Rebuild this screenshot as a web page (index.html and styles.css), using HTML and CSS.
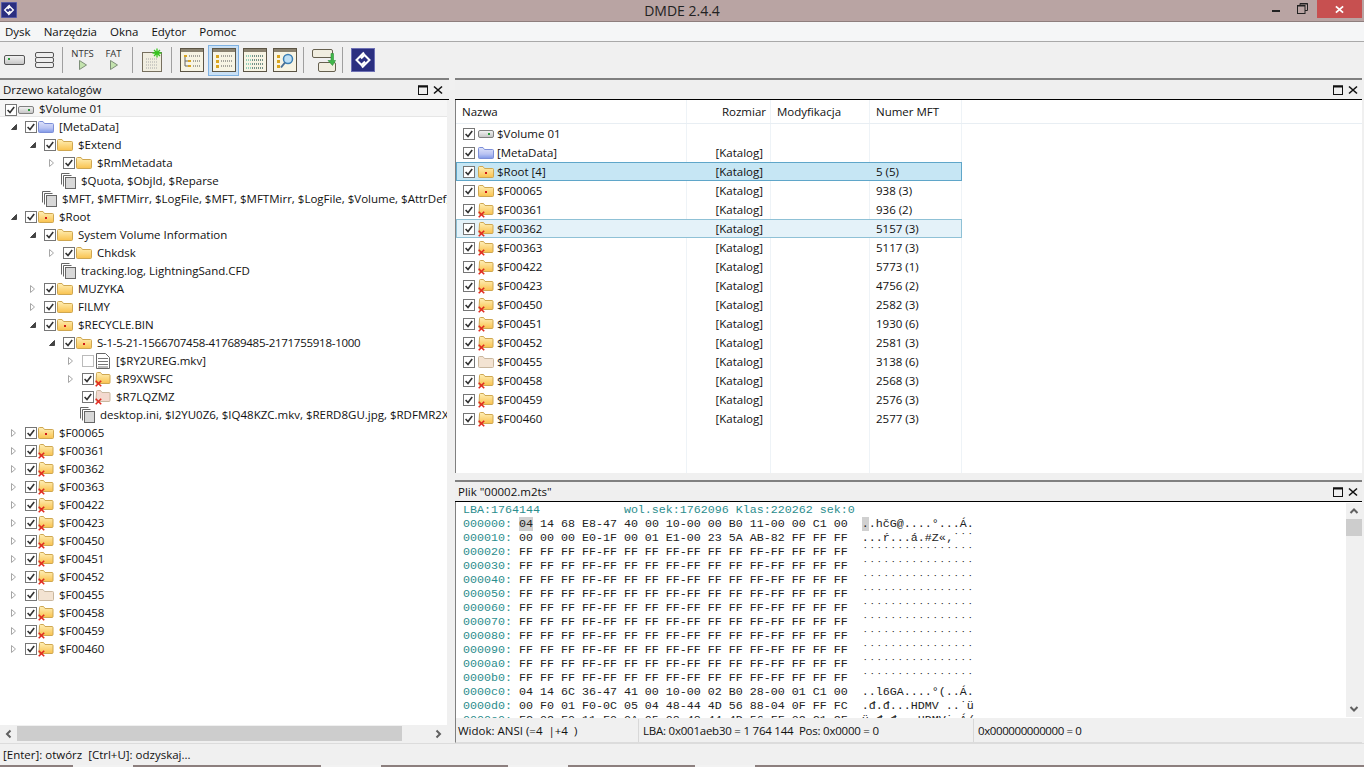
FILE: index.html
```html
<!DOCTYPE html>
<html lang="pl">
<head>
  <meta charset="UTF-8">
  <title>DMDE 2.4.4</title>
  <link rel="stylesheet" href="styles.css">
</head>
<body>

  <!-- Ikony -->
  <svg class="defs" width="0" height="0">
    <defs>
      <linearGradient id="gy" x1="0" y1="0" x2="0" y2="1"><stop offset="0" stop-color="#fff0b8"/><stop offset="1" stop-color="#f9c24e"/></linearGradient>
      <linearGradient id="gb" x1="0" y1="0" x2="0" y2="1"><stop offset="0" stop-color="#dfe3fa"/><stop offset=".6" stop-color="#b9c3f2"/><stop offset="1" stop-color="#7e97e8"/></linearGradient>
      <linearGradient id="gh" x1="0" y1="0" x2="0" y2="1"><stop offset="0" stop-color="#f4f4f4"/><stop offset="1" stop-color="#c4c4c4"/></linearGradient>
    </defs>
    <symbol id="cb" viewBox="0 0 12 12"><rect x=".5" y=".5" width="11" height="11" fill="#fff" stroke="#767676"/><path d="M2.6 6l2.4 2.6 4.2-5.600" fill="none" stroke="#333" stroke-width="1.600"/></symbol>
    <symbol id="cb-off" viewBox="0 0 12 12"><rect x=".5" y=".5" width="11" height="11" fill="#fff" stroke="#777" stroke-dasharray="1 1"/></symbol>
    <symbol id="open" viewBox="0 0 8 8"><path d="M1.500.5l4 3.500-4 3.500z" fill="#fff" stroke="#a6a6a6"/></symbol>
    <symbol id="shut" viewBox="0 0 8 8"><path d="M6.500 1.500v5h-5z" fill="#444" stroke="#444"/></symbol>
    <symbol id="hdd" viewBox="0 0 16 16"><rect x=".5" y="4.500" width="15" height="7" rx="1.500" fill="url(#gh)" stroke="#808080"/><rect x="10" y="7" width="2" height="2" fill="#2a9a3a"/></symbol>
    <symbol id="folder" viewBox="0 0 16 16"><path d="M.5 4V3.500a1 1 0 0 1 1-1h3.500l1.500 2h8a1 1 0 0 1 1 1v7a1 1 0 0 1-1 1h-13a1 1 0 0 1-1-1z" fill="url(#gy)" stroke="#cfa751"/></symbol>
    <symbol id="folder-blue" viewBox="0 0 16 16"><path d="M.5 4V3.500a1 1 0 0 1 1-1h3.500l1.500 2h8a1 1 0 0 1 1 1v7a1 1 0 0 1-1 1h-13a1 1 0 0 1-1-1z" fill="url(#gb)" stroke="#7d8fd8"/></symbol>
    <symbol id="folder-dot" viewBox="0 0 16 16"><path d="M.5 4V3.500a1 1 0 0 1 1-1h3.500l1.500 2h8a1 1 0 0 1 1 1v7a1 1 0 0 1-1 1h-13a1 1 0 0 1-1-1z" fill="url(#gy)" stroke="#cfa751"/><rect x="7" y="8" width="2" height="2" fill="#d01818"/></symbol>
    <symbol id="folder-x" viewBox="0 0 16 16"><path d="M1.500 3V2.500a1 1 0 0 1 1-1h3l1.500 2h7a1 1 0 0 1 1 1v7a1 1 0 0 1-1 1h-12a1 1 0 0 1-1-1z" fill="url(#gy)" stroke="#cfa751"/><path d="M.7 9.700l5.500 5.600m0-5.600l-5.500 5.600" fill="none" stroke="#e02a20" stroke-width="1.600"/></symbol>
    <symbol id="folder-pale" viewBox="0 0 16 16"><path d="M.5 4V3.500a1 1 0 0 1 1-1h3.500l1.500 2h8a1 1 0 0 1 1 1v7a1 1 0 0 1-1 1h-13a1 1 0 0 1-1-1z" fill="#f3e3d2" stroke="#c9b79f"/></symbol>
    <symbol id="folder-pale-x" viewBox="0 0 16 16"><path d="M1.500 3V2.500a1 1 0 0 1 1-1h3l1.500 2h7a1 1 0 0 1 1 1v7a1 1 0 0 1-1 1h-12a1 1 0 0 1-1-1z" fill="#f3d9cf" stroke="#c9b79f"/><path d="M.7 9.700l5.500 5.600m0-5.600l-5.500 5.600" fill="none" stroke="#e02a20" stroke-width="1.600"/></symbol>
    <symbol id="files" viewBox="0 0 16 16"><path d="M.5 11.500V.5h8M2.500 13.500V2.500h8" fill="#fff" stroke="#666"/><rect x="4.500" y="4.500" width="10" height="11" fill="#d8d8d8" stroke="#666"/></symbol>
    <symbol id="file-lines" viewBox="0 0 16 16"><path d="M1.500.5h9l4 4v11h-13z" fill="#fff" stroke="#666"/><path d="M3 5.500h10M3 8.500h10M3 11.500h10M3 14h10" stroke="#777"/></symbol>
    <symbol id="logo" viewBox="0 0 24 24"><rect width="24" height="24" fill="#2b2f80"/><rect x=".5" y=".5" width="23" height="23" fill="none" stroke="#6d70b4"/><path d="M13 4.500L5.500 12l5 5 3.500-3.500M11 19.500l7.500-7.500-5-5L10 10.500" fill="none" stroke="#fff" stroke-width="2"/></symbol>
    <symbol id="up" viewBox="0 0 10 10"><path d="M1.500 7L5 3.500 8.500 7" fill="none" stroke="#606060" stroke-width="2"/></symbol>
    <symbol id="down" viewBox="0 0 10 10"><path d="M1.500 3L5 6.500 8.500 3" fill="none" stroke="#606060" stroke-width="2"/></symbol>
    <symbol id="left" viewBox="0 0 10 10"><path d="M7 1.500L3.500 5 7 8.500" fill="none" stroke="#606060" stroke-width="2"/></symbol>
    <symbol id="right" viewBox="0 0 10 10"><path d="M3 1.500L6.500 5 3 8.500" fill="none" stroke="#606060" stroke-width="2"/></symbol>
    <symbol id="max" viewBox="0 0 10 10"><rect x=".5" y="1" width="9" height="8.500" fill="none" stroke="#111"/><path d="M0 1.500h10" stroke="#111" stroke-width="2"/></symbol>
    <symbol id="close" viewBox="0 0 10 10"><path d="M1 1.500l8 7m0-7l-8 7" fill="none" stroke="#111" stroke-width="1.600"/></symbol>
    <symbol id="play" viewBox="0 0 10 12"><path d="M1.500 1.500l7 4.500-7 4.500z" fill="#c4e3ae" stroke="#7d8f78"/></symbol>
    <symbol id="tb-frame" viewBox="0 0 24 24"><rect x=".5" y=".5" width="23" height="23" fill="#f7f4e4" stroke="#5c5545"/><rect x="1" y="1" width="22" height="3" fill="#8a8270"/></symbol>
  </svg>

  <div class="titlebar">
    <svg class="app-icon"><use href="#logo"/></svg>
    <span class="app-name">DMDE 2.4.4</span>
    <div class="win-btns">
      <span class="win-min"></span>
      <svg class="win-restore" viewBox="0 0 11 11"><path d="M3 2.500V.5h7.500v7H8" fill="none" stroke="#222"/><rect x=".5" y="2.500" width="7.500" height="8" fill="none" stroke="#222"/><path d="M0 3h8M3 1h8" stroke="#222"/></svg>
      <span class="win-close"><svg viewBox="0 0 10 10"><path d="M1 1.500l8 7m0-7l-8 7" fill="none" stroke="#fff" stroke-width="2"/></svg></span>
    </div>
  </div>

  <div class="menubar">
    <span>Dysk</span><span>Narzędzia</span><span>Okna</span><span>Edytor</span><span>Pomoc</span>
  </div>

  <div class="toolbar">
    <div class="tb tb-first">
      <svg width="22" height="12" viewBox="0 0 22 12"><rect x=".5" y="1.500" width="20" height="9" rx="1.500" fill="url(#gh)" stroke="#555"/><rect x="4" y="4" width="2" height="2" fill="#2a9a3a"/></svg>
    </div>
    <div class="tb tb-narrow">
      <svg width="19" height="17" viewBox="0 0 19 17"><rect x=".5" y=".5" width="18" height="5" rx="1.500" fill="#eee" stroke="#555"/><rect x=".5" y="5.500" width="18" height="5" rx="1.500" fill="#eee" stroke="#555"/><rect x=".5" y="10.500" width="18" height="5" rx="1.500" fill="#eee" stroke="#555"/></svg>
    </div>
    <span class="sep"></span>
    <div class="tb tb-label tb-after-sep"><span>NTFS</span><svg width="10" height="12"><use href="#play"/></svg></div>
    <div class="tb tb-label"><span>FAT</span><svg width="10" height="12"><use href="#play"/></svg></div>
    <span class="sep"></span>
    <div class="tb tb-after-sep">
      <svg width="21" height="24" viewBox="0 0 21 24"><rect x=".5" y="4.500" width="19" height="19" fill="#f1eee0" stroke="#77705f"/><path d="M4 11h12M4 14h12M4 17h12M4 20h12" stroke="#a8a8a8" stroke-dasharray="1 1"/><path d="M15 .5v9M10.500 5h9M12 2l6 6m0-6l-6 6" stroke="#36c41e" stroke-width="1.300"/></svg>
    </div>
    <span class="sep"></span>
    <div class="tb tb-after-sep">
      <svg width="24" height="24"><use href="#tb-frame"/><path d="M4 7h3v2H4zM8 12h3v2H8zM8 17h3v2H8z" fill="#d9a520"/><path d="M5 9v9h3M5 13h3" fill="none" stroke="#666"/><path d="M9 8h11M13 13h7M13 18h7" stroke="#555" stroke-dasharray="1 1"/></svg>
    </div>
    <div class="tb tb-active">
      <svg width="24" height="24"><use href="#tb-frame"/><path d="M4 7h3v3H4zM4 12h3v3H4zM4 17h3v3H4z" fill="#d9a520"/><path d="M9 8h11M9 13h11M9 18h11" stroke="#555" stroke-dasharray="1 1"/></svg>
    </div>
    <div class="tb">
      <svg width="24" height="24"><use href="#tb-frame"/><path d="M3 8h18M3 12h18M3 16h18M3 20h18" stroke="#2fa78f" stroke-dasharray="1 1"/><path d="M9 8h12M9 12h12M9 16h12M9 20h12" stroke="#555" stroke-dasharray="1 1"/></svg>
    </div>
    <div class="tb tb-narrow">
      <svg width="24" height="24"><use href="#tb-frame"/><path d="M4 7h3v3H4zM4 12h3v3H4zM4 17h3v3H4z" fill="#d9a520"/><circle cx="15" cy="11" r="4.500" fill="#bfe0f5" stroke="#3b7fb5" stroke-width="1.500"/><path d="M12 14.500l-4 5" stroke="#4a6f94" stroke-width="2"/></svg>
    </div>
    <span class="sep"></span>
    <div class="tb tb-after-sep">
      <svg width="24" height="23" viewBox="0 0 24 23"><rect x=".5" y=".5" width="20" height="8" rx="1.500" fill="#f1eee0" stroke="#66604f"/><rect x="6.500" y="13.500" width="17" height="9" rx="1.500" fill="#f1eee0" stroke="#66604f"/><path d="M19 4.500v7h-3l4.500 5 3-5h-2v-7z" fill="#40b84a" stroke="#2d8f38" stroke-width=".6"/></svg>
    </div>
    <span class="sep"></span>
    <div class="tb tb-after-sep"><svg width="24" height="24"><use href="#logo"/></svg></div>
  </div>

  <div class="main">

    <!-- Drzewo katalogów -->
    <div class="panel panel-tree">
      <div class="panel-head">
        <span>Drzewo katalogów</span>
        <svg class="head-btn"><use href="#max"/></svg><svg class="head-btn"><use href="#close"/></svg>
      </div>
      <div class="tree">
        <div class="row l0 row-current"><svg class="cb"><use href="#cb"/></svg><svg class="ico"><use href="#hdd"/></svg>$Volume 01</div>
        <div class="row l1"><svg class="arrow"><use href="#shut"/></svg><svg class="cb"><use href="#cb"/></svg><svg class="ico"><use href="#folder-blue"/></svg>[MetaData]</div>
        <div class="row l2"><svg class="arrow"><use href="#shut"/></svg><svg class="cb"><use href="#cb"/></svg><svg class="ico"><use href="#folder"/></svg>$Extend</div>
        <div class="row l3"><svg class="arrow"><use href="#open"/></svg><svg class="cb"><use href="#cb"/></svg><svg class="ico"><use href="#folder"/></svg>$RmMetadata</div>
        <div class="row f3"><svg class="ico"><use href="#files"/></svg>$Quota, $ObjId, $Reparse</div>
        <div class="row f2"><svg class="ico"><use href="#files"/></svg>$MFT, $MFTMirr, $LogFile, $MFT, $MFTMirr, $LogFile, $Volume, $AttrDef, $Root, $Bitmap</div>
        <div class="row l1"><svg class="arrow"><use href="#shut"/></svg><svg class="cb"><use href="#cb"/></svg><svg class="ico"><use href="#folder-dot"/></svg>$Root</div>
        <div class="row l2"><svg class="arrow"><use href="#shut"/></svg><svg class="cb"><use href="#cb"/></svg><svg class="ico"><use href="#folder"/></svg>System Volume Information</div>
        <div class="row l3"><svg class="arrow"><use href="#open"/></svg><svg class="cb"><use href="#cb"/></svg><svg class="ico"><use href="#folder"/></svg>Chkdsk</div>
        <div class="row f3"><svg class="ico"><use href="#files"/></svg>tracking.log, LightningSand.CFD</div>
        <div class="row l2"><svg class="arrow"><use href="#open"/></svg><svg class="cb"><use href="#cb"/></svg><svg class="ico"><use href="#folder"/></svg>MUZYKA</div>
        <div class="row l2"><svg class="arrow"><use href="#open"/></svg><svg class="cb"><use href="#cb"/></svg><svg class="ico"><use href="#folder"/></svg>FILMY</div>
        <div class="row l2"><svg class="arrow"><use href="#shut"/></svg><svg class="cb"><use href="#cb"/></svg><svg class="ico"><use href="#folder-dot"/></svg>$RECYCLE.BIN</div>
        <div class="row l3 row-digits"><svg class="arrow"><use href="#shut"/></svg><svg class="cb"><use href="#cb"/></svg><svg class="ico"><use href="#folder-dot"/></svg>S-1-5-21-1566707458-417689485-2171755918-1000</div>
        <div class="row l4"><svg class="arrow"><use href="#open"/></svg><svg class="cb"><use href="#cb-off"/></svg><svg class="ico"><use href="#file-lines"/></svg>[$RY2UREG.mkv]</div>
        <div class="row l4"><svg class="arrow"><use href="#open"/></svg><svg class="cb"><use href="#cb"/></svg><svg class="ico"><use href="#folder-x"/></svg>$R9XWSFC</div>
        <div class="row l4"><svg class="arrow"></svg><svg class="cb"><use href="#cb"/></svg><svg class="ico"><use href="#folder-pale-x"/></svg>$R7LQZMZ</div>
        <div class="row f4"><svg class="ico"><use href="#files"/></svg>desktop.ini, $I2YU0Z6, $IQ48KZC.mkv, $RERD8GU.jpg, $RDFMR2X.jpg</div>
        <div class="row l1"><svg class="arrow"><use href="#open"/></svg><svg class="cb"><use href="#cb"/></svg><svg class="ico"><use href="#folder-dot"/></svg>$F00065</div>
        <div class="row l1"><svg class="arrow"><use href="#open"/></svg><svg class="cb"><use href="#cb"/></svg><svg class="ico"><use href="#folder-x"/></svg>$F00361</div>
        <div class="row l1"><svg class="arrow"><use href="#open"/></svg><svg class="cb"><use href="#cb"/></svg><svg class="ico"><use href="#folder-x"/></svg>$F00362</div>
        <div class="row l1"><svg class="arrow"><use href="#open"/></svg><svg class="cb"><use href="#cb"/></svg><svg class="ico"><use href="#folder-x"/></svg>$F00363</div>
        <div class="row l1"><svg class="arrow"><use href="#open"/></svg><svg class="cb"><use href="#cb"/></svg><svg class="ico"><use href="#folder-x"/></svg>$F00422</div>
        <div class="row l1"><svg class="arrow"><use href="#open"/></svg><svg class="cb"><use href="#cb"/></svg><svg class="ico"><use href="#folder-x"/></svg>$F00423</div>
        <div class="row l1"><svg class="arrow"><use href="#open"/></svg><svg class="cb"><use href="#cb"/></svg><svg class="ico"><use href="#folder-x"/></svg>$F00450</div>
        <div class="row l1"><svg class="arrow"><use href="#open"/></svg><svg class="cb"><use href="#cb"/></svg><svg class="ico"><use href="#folder-x"/></svg>$F00451</div>
        <div class="row l1"><svg class="arrow"><use href="#open"/></svg><svg class="cb"><use href="#cb"/></svg><svg class="ico"><use href="#folder-x"/></svg>$F00452</div>
        <div class="row l1"><svg class="arrow"><use href="#open"/></svg><svg class="cb"><use href="#cb"/></svg><svg class="ico"><use href="#folder-pale"/></svg>$F00455</div>
        <div class="row l1"><svg class="arrow"><use href="#open"/></svg><svg class="cb"><use href="#cb"/></svg><svg class="ico"><use href="#folder-x"/></svg>$F00458</div>
        <div class="row l1"><svg class="arrow"><use href="#open"/></svg><svg class="cb"><use href="#cb"/></svg><svg class="ico"><use href="#folder-x"/></svg>$F00459</div>
        <div class="row l1"><svg class="arrow"><use href="#open"/></svg><svg class="cb"><use href="#cb"/></svg><svg class="ico"><use href="#folder-x"/></svg>$F00460</div>
      </div>
      <div class="hscroll">
        <svg class="sb-arrow"><use href="#left"/></svg>
        <div class="hthumb"></div>
        <div class="sb-fill"></div>
        <svg class="sb-arrow"><use href="#right"/></svg>
      </div>
    </div>

    <div class="right-col">

      <!-- Lista plików -->
      <div class="panel panel-list">
        <div class="panel-head panel-head-empty">
          <svg class="head-btn"><use href="#max"/></svg><svg class="head-btn"><use href="#close"/></svg>
        </div>
        <div class="list">
          <div class="list-cols"><span></span><span></span><span></span><span></span></div>
          <div class="lrow lhead"><span class="c-name">Nazwa</span><span class="c-size">Rozmiar</span><span class="c-mod">Modyfikacja</span><span class="c-mft">Numer MFT</span></div>
          <div class="lrow"><span class="c-name"><svg class="cb"><use href="#cb"/></svg><svg class="ico"><use href="#hdd"/></svg>$Volume 01</span><span class="c-size"></span><span class="c-mod"></span><span class="c-mft"></span></div>
          <div class="lrow"><span class="c-name"><svg class="cb"><use href="#cb"/></svg><svg class="ico"><use href="#folder-blue"/></svg>[MetaData]</span><span class="c-size">[Katalog]</span><span class="c-mod"></span><span class="c-mft"></span></div>
          <div class="lrow lrow-sel"><span class="c-name"><svg class="cb"><use href="#cb"/></svg><svg class="ico"><use href="#folder-dot"/></svg>$Root [4]</span><span class="c-size">[Katalog]</span><span class="c-mod"></span><span class="c-mft">5 (5)</span></div>
          <div class="lrow"><span class="c-name"><svg class="cb"><use href="#cb"/></svg><svg class="ico"><use href="#folder-dot"/></svg>$F00065</span><span class="c-size">[Katalog]</span><span class="c-mod"></span><span class="c-mft">938 (3)</span></div>
          <div class="lrow"><span class="c-name"><svg class="cb"><use href="#cb"/></svg><svg class="ico"><use href="#folder-x"/></svg>$F00361</span><span class="c-size">[Katalog]</span><span class="c-mod"></span><span class="c-mft">936 (2)</span></div>
          <div class="lrow lrow-hover"><span class="c-name"><svg class="cb"><use href="#cb"/></svg><svg class="ico"><use href="#folder-x"/></svg>$F00362</span><span class="c-size">[Katalog]</span><span class="c-mod"></span><span class="c-mft">5157 (3)</span></div>
          <div class="lrow"><span class="c-name"><svg class="cb"><use href="#cb"/></svg><svg class="ico"><use href="#folder-x"/></svg>$F00363</span><span class="c-size">[Katalog]</span><span class="c-mod"></span><span class="c-mft">5117 (3)</span></div>
          <div class="lrow"><span class="c-name"><svg class="cb"><use href="#cb"/></svg><svg class="ico"><use href="#folder-x"/></svg>$F00422</span><span class="c-size">[Katalog]</span><span class="c-mod"></span><span class="c-mft">5773 (1)</span></div>
          <div class="lrow"><span class="c-name"><svg class="cb"><use href="#cb"/></svg><svg class="ico"><use href="#folder-x"/></svg>$F00423</span><span class="c-size">[Katalog]</span><span class="c-mod"></span><span class="c-mft">4756 (2)</span></div>
          <div class="lrow"><span class="c-name"><svg class="cb"><use href="#cb"/></svg><svg class="ico"><use href="#folder-x"/></svg>$F00450</span><span class="c-size">[Katalog]</span><span class="c-mod"></span><span class="c-mft">2582 (3)</span></div>
          <div class="lrow"><span class="c-name"><svg class="cb"><use href="#cb"/></svg><svg class="ico"><use href="#folder-x"/></svg>$F00451</span><span class="c-size">[Katalog]</span><span class="c-mod"></span><span class="c-mft">1930 (6)</span></div>
          <div class="lrow"><span class="c-name"><svg class="cb"><use href="#cb"/></svg><svg class="ico"><use href="#folder-x"/></svg>$F00452</span><span class="c-size">[Katalog]</span><span class="c-mod"></span><span class="c-mft">2581 (3)</span></div>
          <div class="lrow"><span class="c-name"><svg class="cb"><use href="#cb"/></svg><svg class="ico"><use href="#folder-pale"/></svg>$F00455</span><span class="c-size">[Katalog]</span><span class="c-mod"></span><span class="c-mft">3138 (6)</span></div>
          <div class="lrow"><span class="c-name"><svg class="cb"><use href="#cb"/></svg><svg class="ico"><use href="#folder-x"/></svg>$F00458</span><span class="c-size">[Katalog]</span><span class="c-mod"></span><span class="c-mft">2568 (3)</span></div>
          <div class="lrow"><span class="c-name"><svg class="cb"><use href="#cb"/></svg><svg class="ico"><use href="#folder-x"/></svg>$F00459</span><span class="c-size">[Katalog]</span><span class="c-mod"></span><span class="c-mft">2576 (3)</span></div>
          <div class="lrow"><span class="c-name"><svg class="cb"><use href="#cb"/></svg><svg class="ico"><use href="#folder-x"/></svg>$F00460</span><span class="c-size">[Katalog]</span><span class="c-mod"></span><span class="c-mft">2577 (3)</span></div>
        </div>
      </div>

      <!-- Podgląd szesnastkowy -->
      <div class="panel panel-hex">
        <div class="panel-head">
          <span>Plik "00002.m2ts"</span>
          <svg class="head-btn"><use href="#max"/></svg><svg class="head-btn"><use href="#close"/></svg>
        </div>
        <div class="hex-body">
<pre class="hex"><span class="off">LBA:1764144            wol.sek:1762096 Klas:220262 sek:0</span>
<span class="off">000000:</span> <span class="cur">04</span> 14 68 E8-47 40 00 10-00 00 B0 11-00 00 C1 00  <span class="cur">.</span>.hčG@....°...Á.
<span class="off">000010:</span> 00 00 00 E0-1F 00 01 E1-00 23 5A AB-82 FF FF FF  ...ŕ...á.#Z«‚˙˙˙
<span class="off">000020:</span> FF FF FF FF-FF FF FF FF-FF FF FF FF-FF FF FF FF  ˙˙˙˙˙˙˙˙˙˙˙˙˙˙˙˙
<span class="off">000030:</span> FF FF FF FF-FF FF FF FF-FF FF FF FF-FF FF FF FF  ˙˙˙˙˙˙˙˙˙˙˙˙˙˙˙˙
<span class="off">000040:</span> FF FF FF FF-FF FF FF FF-FF FF FF FF-FF FF FF FF  ˙˙˙˙˙˙˙˙˙˙˙˙˙˙˙˙
<span class="off">000050:</span> FF FF FF FF-FF FF FF FF-FF FF FF FF-FF FF FF FF  ˙˙˙˙˙˙˙˙˙˙˙˙˙˙˙˙
<span class="off">000060:</span> FF FF FF FF-FF FF FF FF-FF FF FF FF-FF FF FF FF  ˙˙˙˙˙˙˙˙˙˙˙˙˙˙˙˙
<span class="off">000070:</span> FF FF FF FF-FF FF FF FF-FF FF FF FF-FF FF FF FF  ˙˙˙˙˙˙˙˙˙˙˙˙˙˙˙˙
<span class="off">000080:</span> FF FF FF FF-FF FF FF FF-FF FF FF FF-FF FF FF FF  ˙˙˙˙˙˙˙˙˙˙˙˙˙˙˙˙
<span class="off">000090:</span> FF FF FF FF-FF FF FF FF-FF FF FF FF-FF FF FF FF  ˙˙˙˙˙˙˙˙˙˙˙˙˙˙˙˙
<span class="off">0000a0:</span> FF FF FF FF-FF FF FF FF-FF FF FF FF-FF FF FF FF  ˙˙˙˙˙˙˙˙˙˙˙˙˙˙˙˙
<span class="off">0000b0:</span> FF FF FF FF-FF FF FF FF-FF FF FF FF-FF FF FF FF  ˙˙˙˙˙˙˙˙˙˙˙˙˙˙˙˙
<span class="off">0000c0:</span> 04 14 6C 36-47 41 00 10-00 02 B0 28-00 01 C1 00  ..l6GA....°(..Á.
<span class="off">0000d0:</span> 00 F0 01 F0-0C 05 04 48-44 4D 56 88-04 0F FF FC  .đ.đ...HDMV ..˙ü
<span class="off">0000e0:</span> FC 02 F0 11-F0 0A 05 08-48 44 4D 56-FF 02 C1 2F  ü.đ.đ...HDMV˙.Á/</pre>
          <div class="vscroll">
            <svg class="sb-arrow"><use href="#up"/></svg>
            <div class="vthumb"></div>
            <div class="sb-fill"></div>
            <svg class="sb-arrow"><use href="#down"/></svg>
          </div>
        </div>
        <div class="hex-status">
          <span class="hs-view">Widok: ANSI (=4 &nbsp;|+4 &nbsp;)</span>
          <span class="hs-pos">LBA: 0x001aeb30 = 1 764 144 &nbsp;Pos: 0x0000 = 0</span>
          <span class="hs-val">0x000000000000 = 0</span>
        </div>
      </div>

    </div>
  </div>

  <div class="statusbar">[Enter]: otwórz &nbsp;[Ctrl+U]: odzyskaj...</div>
  <div class="taskstrip"><span></span><span></span><span></span><span></span></div>

</body>
</html>
```

FILE: styles.css
```css
* {
  box-sizing: border-box;
}

html, body {
  margin: 0;
  height: 767px;
  overflow: hidden;
}

body {
  display: flex;
  flex-direction: column;
  background: #f0f0f0;
  font-family: "Open Sans", sans-serif;
  font-size: 11.5px;
  color: #111;
}

svg {
  display: block;
  flex: none;
}

.defs {
  height: 0;
}

/* Pasek tytułu */
.titlebar {
  height: 22px;
  flex: none;
  display: flex;
  align-items: flex-start;
  background: #b9a4a3;
  border-bottom: 1px solid #8e7e7d;
}

.app-icon {
  width: 16px;
  height: 16px;
  margin: 2px 0 0 1px;
}

.app-name {
  flex: 1;
  text-align: center;
  font-size: 14px;
  line-height: 21px;
  padding-left: 81px;
  color: #222;
}

.win-btns {
  width: 98px;
  display: flex;
  align-items: flex-start;
  flex: none;
}

.win-min {
  width: 8px;
  height: 2px;
  margin: 10px 0 0 6px;
  background: #222;
}

.win-restore {
  width: 11px;
  height: 11px;
  margin: 3px 0 0 17px;
}

.win-close {
  width: 45px;
  height: 18px;
  margin-left: 9px;
  background: #c75050;
  display: flex;
  align-items: center;
  justify-content: center;
}

.win-close svg {
  width: 9px;
  height: 9px;
}

/* Menu */
.menubar {
  height: 20px;
  flex: none;
  display: flex;
  align-items: center;
  padding-left: 5px;
  gap: 13px;
  background: #f5f6f7;
  border-bottom: 1px solid #a9a9a9;
  font-size: 11.5px;
}

/* Pasek narzędzi */
.toolbar {
  height: 36px;
  flex: none;
  display: flex;
  align-items: center;
  background: #f0f0f0;
}

.tb {
  width: 31px;
  height: 31px;
  display: flex;
  flex-direction: column;
  align-items: center;
  justify-content: center;
  border: 1px solid transparent;
}

.tb-first {
  width: 29px;
}

.tb-narrow {
  width: 30px;
}

.tb-after-sep {
  margin-left: 4px;
}

.tb-label {
  font-size: 9.5px;
  line-height: 11px;
  color: #333;
  padding-bottom: 2px;
}

.tb-active {
  margin-left: 1px;
  background: #c9e0f5;
  border-color: #7fb2e2;
}

.sep {
  width: 1px;
  height: 26px;
  margin-left: 3px;
  background: #a0a0a0;
}

/* Panele */
.main {
  flex: 1;
  display: flex;
  gap: 6px;
  padding-right: 2px;
  min-height: 0;
}

.panel {
  display: flex;
  flex-direction: column;
  min-height: 0;
}

.panel-tree {
  width: 449px;
  flex: none;
  padding-bottom: 2px;
}

.right-col {
  flex: 1;
  min-width: 0;
  display: flex;
  flex-direction: column;
  gap: 7px;
}

.panel-list {
  height: 395px;
  flex: none;
}

.panel-hex {
  flex: 1;
}

.panel-head {
  height: 22px;
  flex: none;
  display: flex;
  align-items: center;
  padding: 0 4px 0 3px;
  gap: 5px;
  background: #efefef;
  border-top: 2px solid #808080;
  border-bottom: 1px solid #000;
  font-size: 11.5px;
}

.panel-tree .panel-head {
  padding-right: 6px;
}

.panel-head span {
  flex: 1;
}

.panel-head-empty {
  justify-content: flex-end;
}

.head-btn {
  width: 10px;
  height: 10px;
}

/* Drzewo */
.tree {
  flex: 1;
  background: #fff;
  overflow: hidden;
  margin-right: 2px;
}

.row {
  height: 18px;
  display: flex;
  align-items: center;
  white-space: nowrap;
  overflow: hidden;
}

.row svg {
  margin-top: 2px;
}

.row-current {
  height: 17px;
  padding-top: 1px;
  background: #f6f6f6;
  border-bottom: 1px solid #e6e6e6;
}

.row-digits {
  letter-spacing: -0.27px;
}

.l0, .l1 { padding-left: 5px; }
.l2 { padding-left: 24px; }
.l3 { padding-left: 43px; }
.l4 { padding-left: 62px; }
.f2 { padding-left: 42px; }
.f3 { padding-left: 61px; }
.f4 { padding-left: 80px; }

.arrow {
  width: 8px;
  height: 8px;
  margin-left: 5px;
  margin-right: 7px;
}

.cb {
  width: 12px;
  height: 12px;
}

.ico {
  width: 16px;
  height: 16px;
  margin-left: 1px;
  margin-right: 5px;
}

.f2 .ico, .f3 .ico, .f4 .ico {
  margin-left: 0;
  margin-right: 4px;
}

/* Paski przewijania */
.hscroll {
  height: 15px;
  flex: none;
  display: flex;
  align-items: center;
  margin-top: 1px;
  margin-right: 2px;
  background: #f0f0f0;
}

.hscroll .sb-arrow {
  width: 17px;
  height: 10px;
}

.hthumb {
  width: 385px;
  height: 15px;
  background: #cdcdcd;
}

.sb-fill {
  flex: 1;
}

.vscroll {
  width: 16px;
  flex: none;
  margin: 1px 0;
  display: flex;
  flex-direction: column;
  background: #f0f0f0;
}

.vscroll .sb-arrow {
  width: 16px;
  height: 16px;
  padding: 3px;
}

.vthumb {
  height: 17px;
  background: #cdcdcd;
}

/* Lista */
.list {
  flex: 1;
  position: relative;
  background: #fff;
  border-left: 1px solid #808080;
  overflow: hidden;
}

.list-cols {
  position: absolute;
  inset: 0 auto 0 0;
  display: grid;
  grid-template-columns: 231px 84px 99px 92px;
  height: 100%;
}

.list-cols span {
  border-right: 1px solid #eef3f7;
}

.lrow {
  position: relative;
  display: grid;
  grid-template-columns: 231px 84px 99px 92px;
  width: 506px;
  height: 19px;
  align-items: center;
  white-space: nowrap;
}

.lhead {
  width: auto;
  height: 24px;
  border-bottom: 1px solid #e8eef3;
}

.c-name {
  display: flex;
  align-items: center;
  padding-left: 7px;
}

.c-size {
  text-align: right;
  padding-right: 8px;
}

.c-mod, .c-mft {
  padding-left: 6px;
}

.lhead .c-name {
  padding-left: 6px;
}

.lhead .c-size {
  padding-right: 5px;
}

.lrow .ico {
  margin: 0 3px;
}

.lrow-sel {
  background: #c6e6f4;
  outline: 1px solid #5fa6c9;
  outline-offset: -1px;
}

.lrow-hover {
  background: #e4f2f9;
  outline: 1px solid #8fc1d6;
  outline-offset: -1px;
}

/* Podgląd hex */
.hex-body {
  flex: 1;
  min-height: 0;
  display: flex;
  background: #fff;
  border-left: 1px solid #808080;
}

.hex {
  flex: 1;
  margin: 0;
  padding: 1px 0 0 7px;
  overflow: hidden;
  font-family: "Liberation Mono", monospace;
  font-size: 11.67px;
  line-height: 14px;
  color: #222;
}

.off {
  color: #2b8d8d;
}

.cur {
  background: #d0d0d0;
}

.hex-status {
  height: 25px;
  flex: none;
  display: flex;
  align-items: center;
  border-left: 1px solid #808080;
  border-bottom: 1px solid #dcdcdc;
  background: #f0f0f0;
  font-size: 11.5px;
}

.hs-view {
  width: 182px;
  padding-left: 2px;
}

.hs-pos {
  width: 335px;
  padding-left: 4px;
  line-height: 23px;
  letter-spacing: -0.23px;
  border-left: 1px solid #d8d8d8;
}

.hs-val {
  padding-left: 4px;
  line-height: 23px;
  letter-spacing: -0.4px;
  border-left: 1px solid #d8d8d8;
}

/* Pasek stanu */
.statusbar {
  height: 22px;
  flex: none;
  display: flex;
  align-items: center;
  padding-left: 3px;
  background: #f0f0f0;
  border-top: 1px solid #dcdcdc;
  font-size: 11.5px;
}

.taskstrip {
  height: 2px;
  flex: none;
  display: flex;
  gap: 127px;
  padding-left: 73px;
  background: #8c7f7e;
}

.taskstrip span {
  width: 60px;
  background: #f2f2f2;
}

.taskstrip span:first-child {
  margin-right: 61px;
}
```
